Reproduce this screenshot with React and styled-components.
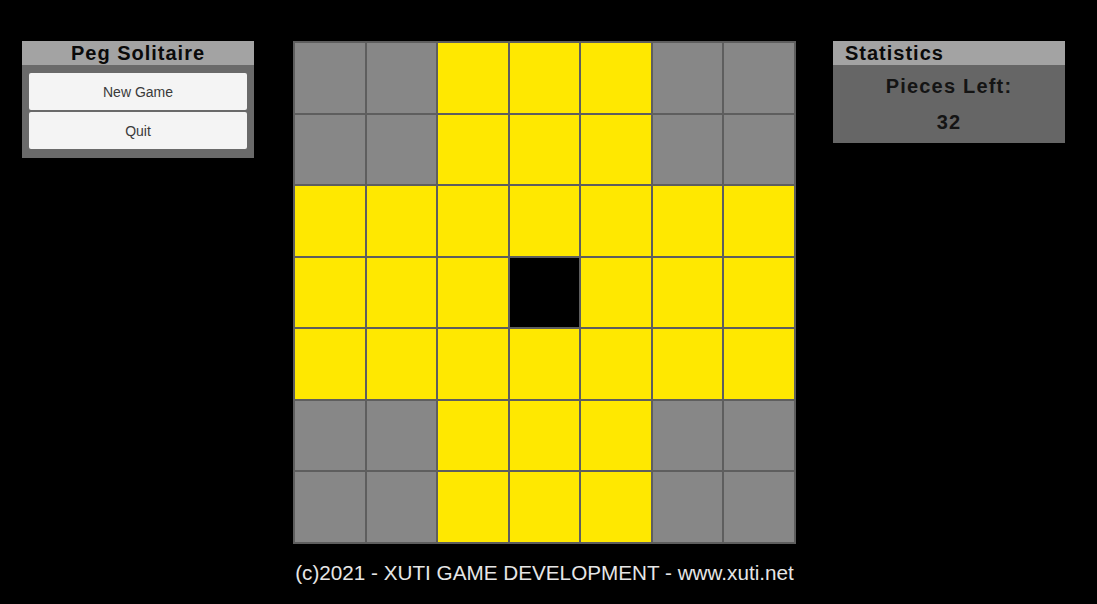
import React from 'react';
import styled, { createGlobalStyle } from 'styled-components';

const GlobalStyle = createGlobalStyle`
  html, body {
    margin: 0;
    padding: 0;
    background: #000;
    font-family: "Liberation Sans", Arial, sans-serif;
  }
`;

const Screen = styled.div`
  width: 1097px;
  height: 604px;
  background: #000;
  display: flex;
  align-items: flex-start;
  padding: 41px 0 0 22px;
  box-sizing: border-box;
`;

const Panel = styled.div`
  width: 232px;
  flex-shrink: 0;
  background: #6a6a6a;
  display: flex;
  flex-direction: column;
`;

const PanelHeader = styled.div`
  height: 24px;
  background: #a3a3a3;
  color: #0a0a0a;
  font-size: 20px;
  font-weight: bold;
  letter-spacing: 1px;
  line-height: 24px;
  text-align: ${props => props.align || 'center'};
  padding: 0 12px;
`;

const ButtonStack = styled.div`
  display: flex;
  flex-direction: column;
  gap: 2px;
  padding: 8px 7px 9px;
`;

const MenuButton = styled.button`
  height: 37px;
  border: none;
  border-radius: 2px;
  background: #f4f4f4;
  color: #3a3a3a;
  font-family: "Liberation Sans", Arial, sans-serif;
  font-size: 14px;
  cursor: pointer;
`;

const StatBody = styled.div`
  height: 78px;
  background: #666;
  display: flex;
  flex-direction: column;
  align-items: center;
  justify-content: space-between;
  padding: 10px 0 9px;
  box-sizing: border-box;
  color: #141414;
  font-size: 20px;
  font-weight: bold;
  letter-spacing: 1.2px;
`;

const Center = styled.div`
  width: 503px;
  flex-shrink: 0;
  display: flex;
  flex-direction: column;
  align-items: center;
  margin: 0 37px 0 39px;
`;

const Board = styled.div`
  width: 503px;
  height: 503px;
  display: grid;
  grid-template-columns: repeat(7, 1fr);
  grid-template-rows: repeat(7, 1fr);
  background: #5e5e5e;
  border: 1px solid #5e5e5e;
  box-sizing: border-box;
`;

const colors = { off: '#878787', peg: '#ffe800', hole: '#000' };

const Cell = styled.div`
  background: ${props => colors[props.kind]};
  border: 1px solid #5e5e5e;
`;

const Footer = styled.div`
  margin-top: 17px;
  color: #e6e6e6;
  font-size: 20.7px;
  white-space: nowrap;
`;

const cellKind = (r, c) => {
  const inArm = (c >= 2 && c <= 4) || (r >= 2 && r <= 4);
  if (!inArm) return 'off';
  if (r === 3 && c === 3) return 'hole';
  return 'peg';
};

export default function App() {
  const cells = [];
  for (let r = 0; r < 7; r++) {
    for (let c = 0; c < 7; c++) {
      cells.push(<Cell key={`${r}-${c}`} kind={cellKind(r, c)} />);
    }
  }
  return (
    <>
      <GlobalStyle />
      <Screen>
        <Panel>
          <PanelHeader>Peg Solitaire</PanelHeader>
          <ButtonStack>
            <MenuButton>New Game</MenuButton>
            <MenuButton>Quit</MenuButton>
          </ButtonStack>
        </Panel>
        <Center>
          <Board>{cells}</Board>
          <Footer>(c)2021 - XUTI GAME DEVELOPMENT - www.xuti.net</Footer>
        </Center>
        <Panel>
          <PanelHeader align="left">Statistics</PanelHeader>
          <StatBody>
            <div>Pieces Left:</div>
            <div>32</div>
          </StatBody>
        </Panel>
      </Screen>
    </>
  );
}
